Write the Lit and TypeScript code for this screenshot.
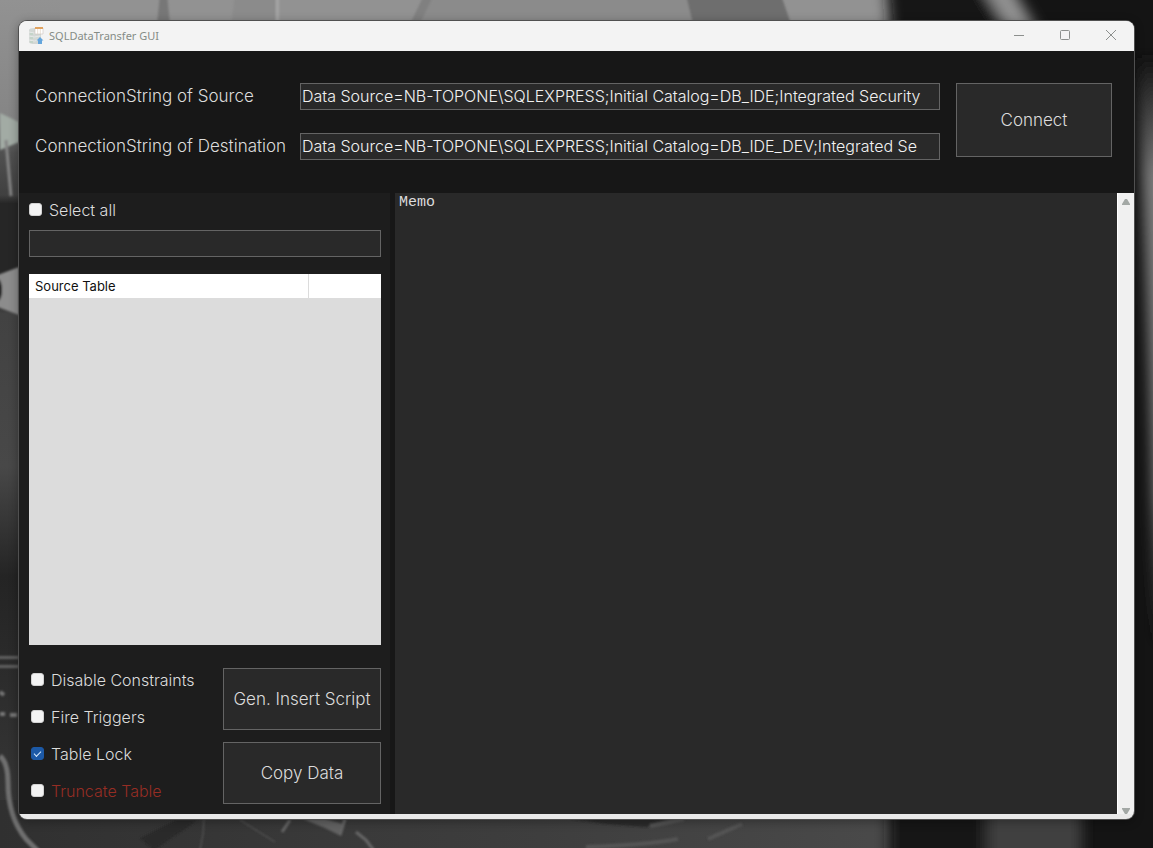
import { LitElement, html, css, svg } from "lit";
import { customElement, property, state } from "lit/decorators.js";

interface CopyOption {
  id: string;
  label: string;
  checked: boolean;
  danger?: boolean;
}

@customElement("desktop-wallpaper")
class DesktopWallpaper extends LitElement {
  static styles = css`
    :host { display: block; }
    svg { display: block; width: 100%; height: 100%; }
  `;

  render() {
    return html`
      <svg viewBox="0 0 1153 848" preserveAspectRatio="none" aria-hidden="true">
        <defs>
          <filter id="soft" filterUnits="userSpaceOnUse" x="-60" y="-60" width="1280" height="980"><feGaussianBlur stdDeviation="7" /></filter>
          <filter id="fine" filterUnits="userSpaceOnUse" x="-20" y="-20" width="1200" height="900"><feGaussianBlur stdDeviation="1" /></filter>
          <linearGradient id="floor" x1="0" x2="1" y1="0" y2="0">
            <stop offset="0" stop-color="#303030" />
            <stop offset="0.2" stop-color="#353535" />
            <stop offset="0.4" stop-color="#3a3a3a" />
            <stop offset="0.6" stop-color="#3e3e3e" />
            <stop offset="1" stop-color="#4a4a4a" />
          </linearGradient>
          <linearGradient id="left" x1="0" x2="0" y1="0" y2="1">
            <stop offset="0" stop-color="#929292" />
            <stop offset="0.14" stop-color="#858585" />
            <stop offset="0.18" stop-color="#505050" />
            <stop offset="0.23" stop-color="#404040" />
            <stop offset="0.24" stop-color="#262626" />
            <stop offset="0.35" stop-color="#262626" />
            <stop offset="0.37" stop-color="#424242" />
            <stop offset="0.55" stop-color="#484848" />
            <stop offset="0.68" stop-color="#242424" />
            <stop offset="0.8" stop-color="#2c2c2c" />
            <stop offset="1" stop-color="#3a3a3a" />
          </linearGradient>
          <linearGradient id="right" x1="0" x2="0" y1="0" y2="1">
            <stop offset="0" stop-color="#141414" />
            <stop offset="0.2" stop-color="#7c7c7c" />
            <stop offset="0.75" stop-color="#868686" />
            <stop offset="1" stop-color="#141414" />
          </linearGradient>
        </defs>
        <rect width="1153" height="848" fill="#141414" />
        <rect width="920" height="60" fill="#929292" />
        <rect width="60" height="848" fill="url(#left)" />
        <rect y="800" width="900" height="48" fill="url(#floor)" />
        <g filter="url(#fine)">
          <path d="M160 -5h7l3 29h-13z" fill="#777" />
          <path d="M235 -5h40v29h-44z" fill="#8b8b8b" />
          <path d="M276 -5h3v29h-3z" fill="#a4a4a4" />
          <path d="M424 -5h10l-14 29h-10z" fill="#808080" />
          <path d="M434 -5h252l14 29H420z" fill="#8b8b8b" />
          <path d="M686 -5h95l10 29h-98z" fill="#6e6e6e" />
          <path d="M0 113l19 9v20L0 150z" fill="#a2aba4" />
          <path d="M6 140l5 56" stroke="#858585" stroke-width="3" />
          <path d="M-5 276l24-9v48L-5 306z" fill="#8c8c8c" />
          <ellipse cx="-2" cy="290" rx="4" ry="11" fill="#191919" />
          <path d="M-5 656h24v3H-5zM-5 665h24v3H-5z" fill="#606060" />
          <path d="M0 692l4 3M0 714h5M10 715h7" stroke="#777" stroke-width="4" />
          <path d="M0 756q8 7 8 26q0 35 18 57l12 12" stroke="#707070" stroke-width="5" fill="none" />
          <path d="M140 838l36-18h22l-44 30z" fill="#292929" />
          <path d="M204 818q0 16-4 32M240 820l35 22" stroke="#5c5c5c" stroke-width="1" fill="none" />
          <path d="M303 819h22l18 5-2 12-16-8z" fill="#626262" />
          <path d="M290 820l-8 12M345 819l-5 16M356 832l10 8 9 12" stroke="#666" stroke-width="3" fill="none" />
          <path d="M570 819h100l-24 8-40-3z" fill="#2b2b2b" />
          <path d="M650 826l34-7M708 839l34-15M586 847q60-2 92-8" stroke="#545454" stroke-width="4" fill="none" />
        </g>
        <g filter="url(#soft)">
          <path d="M882-60h105l60 110H892z" fill="#161616" />
          <path d="M972-30h30l38 65h-28z" fill="#929292" />
          <path d="M889 790h93v120h-93z" fill="#121212" />
          <path d="M986 790h96v120h-96z" fill="#414141" />
          <path d="M1137 60h60v580h-40q-6-300-20-580z" fill="url(#right)" />
        </g>
      </svg>
    `;
  }
}

@customElement("title-bar")
class TitleBar extends LitElement {
  @property() caption = "";

  static styles = css`
    :host {
      display: flex;
      align-items: center;
      height: 30px;
      background: #f3f3f3;
      font: 11px/16px "Noto Sans", sans-serif;
      color: #858c86;
    }
    .logo { width: 16px; height: 18px; margin: 0 5px 0 9px; }
    .caption { flex: 1; font: inherit; margin: 0; }
    .control {
      display: flex;
      justify-content: center;
      width: 46px;
      height: 30px;
      padding: 8px 0 0;
      border: 0;
      background: none;
    }
    .control svg { width: 12px; height: 12px; fill: none; stroke: #8c8f8d; }
  `;

  render() {
    return html`
      <svg class="logo" viewBox="0 0 16 18" aria-hidden="true">
        <path d="M1 3q0-2 6-2t6 2v12q0 2-6 2t-6-2z" fill="#d3d8d5" />
        <path d="M1 5q5 2 11 0M1 9q5 2 11 0M1 13q5 2 11 0" fill="none" stroke="#e6e9e7" />
        <path d="M2 7h3M2 11h3M2 15h3" stroke="#b5d0bd" />
        <path d="M7 1h8v6H7z" fill="#fff" stroke="#ccc5bc" stroke-width=".6" />
        <path d="M7 0h8v2H7z" fill="#e0a25f" />
        <path d="M9.700 2v5M12.300 2v5" stroke="#dccbb8" stroke-width=".6" />
        <path d="M12 10l3.500 3.500H14V17h-4v-3.500H8.500z" fill="#64a5dc" />
      </svg>
      <h1 class="caption">${this.caption}</h1>
      ${[
        { name: "Minimize", shape: svg`<path d="M1 6.500h10" />` },
        { name: "Maximize", shape: svg`<rect x="1.500" y="1.500" width="9" height="9" rx="1" />` },
        { name: "Close", shape: svg`<path d="M1 1l10 10M11 1L1 11" />` },
      ].map((c) => html`<button class="control" aria-label=${c.name}><svg viewBox="0 0 12 12">${c.shape}</svg></button>`)}
    `;
  }
}

@customElement("app-root")
class AppRoot extends LitElement {
  @state() private options: CopyOption[] = [
    { id: "constraints", label: "Disable Constraints", checked: false },
    { id: "triggers", label: "Fire Triggers", checked: false },
    { id: "lock", label: "Table Lock", checked: true },
    { id: "truncate", label: "Truncate Table", checked: false, danger: true },
  ];

  static styles = css`
    :host {
      display: grid;
      box-sizing: border-box;
      min-height: 100vh;
      font: 300 16px/20px Inter, sans-serif;
      color: #dcdcdc;
    }
    * { box-sizing: border-box; }
    .wallpaper, .window { grid-area: 1 / 1; }
    .window {
      position: relative;
      display: flex;
      flex-direction: column;
      margin: 21px 19px 29px;
      padding-bottom: 5px;
      background: #e9e9e9;
      border-radius: 8px;
      overflow: hidden;
    }
    .frame {
      grid-area: 1 / 1;
      margin: 20px 18px 28px;
      border-radius: 9px;
      background: #505050;
      box-shadow: 0 2px 10px rgba(0, 0, 0, 0.3);
    }
    .connections {
      display: grid;
      grid-template-columns: 249px 1fr 156px;
      column-gap: 16px;
      padding: 32px 22px 33px 16px;
      background: #171717;
    }
    .fields {
      grid-column: 1 / 3;
      display: grid;
      grid-template-columns: subgrid;
      row-gap: 23px;
    }
    .fields label { font-size: 17px; line-height: 26px; white-space: nowrap; }
    input, button, textarea { font: inherit; color: inherit; border-radius: 0; }
    .text-box {
      width: 100%;
      min-width: 0;
      height: 27px;
      padding: 0 1px 2px;
      border: 1px solid #646464;
      background: #292929;
      color: #f2f2f2;
    }
    .button {
      border: 1px solid #646464;
      background: #292929;
      padding: 0;
      font-size: 17px;
    }
    .connect { height: 74px; }
    .workspace {
      flex: 1;
      display: grid;
      grid-template-columns: 371px 1fr;
      column-gap: 5px;
      background: #171717;
    }
    .side {
      display: flex;
      flex-direction: column;
      padding: 7px 9px 10px 10px;
      background: #1d1d1d;
    }
    .check { display: flex; align-items: center; gap: 7px; height: 20px; }
    .check input {
      appearance: none;
      display: grid;
      width: 13px;
      height: 13px;
      margin: 0 0 1px;
      border: 1px solid #d2d2d2;
      border-radius: 3px;
      background: #f3f3f3;
    }
    .check input:checked {
      border-color: #1c59a6;
      background: #1c59a6;
    }
    .check input:checked::before {
      content: "";
      width: 6px;
      height: 3px;
      border: solid #d7ebff;
      border-width: 0 0 1px 1px;
      transform: rotate(-45deg);
      place-self: center;
      margin-bottom: 2px;
    }
    .danger { color: #962d24; }
    .side .filter { flex: none; margin: 10px 0 17px; }
    .grid { flex: 1; background: #dcdcdc; }
    .grid table {
      width: 100%;
      border-collapse: collapse;
      table-layout: fixed;
      background: #fff;
      color: #101010;
      font-size: 13px;
    }
    .grid th { height: 24px; padding: 0 6px; text-align: left; font-weight: 400; }
    .grid th + th { width: 73px; border-left: 1px solid #dcdcdc; }
    .actions {
      display: grid;
      grid-template-columns: 1fr 158px;
      margin-top: 23px;
    }
    .options { display: grid; gap: 17px; padding: 2px 2px 0; align-content: start; }
    .buttons { display: grid; grid-auto-rows: 62px; gap: 12px; }
    .output { display: grid; grid-template-columns: 1fr 17px; }
    .memo {
      resize: none;
      border: 0;
      outline: 0;
      padding: 0 4px;
      background: #292929;
      color: #dcdcdc;
      font: 15px/20px "Liberation Mono", monospace;
    }
    .scrollbar {
      display: flex;
      flex-direction: column;
      justify-content: space-between;
      align-items: center;
      padding-top: 6px;
      background: #f0f0f0;
      border-left: 1px solid #fff;
    }
    .scrollbar svg { width: 8px; height: 7px; fill: #a3a8a5; }
  `;

  private toggle(id: string) {
    this.options = this.options.map((o) => (o.id === id ? { ...o, checked: !o.checked } : o));
  }

  render() {
    return html`
      <desktop-wallpaper class="wallpaper"></desktop-wallpaper>
      <div class="frame"></div>
      <main class="window">
        <title-bar caption="SQLDataTransfer GUI"></title-bar>
        <section class="connections">
          <div class="fields">
            <label for="source">ConnectionString of Source</label>
            <input id="source" class="text-box" .value=${"Data Source=NB-TOPONE\\SQLEXPRESS;Initial Catalog=DB_IDE;Integrated Security"} />
            <label for="destination">ConnectionString of Destination</label>
            <input id="destination" class="text-box" .value=${"Data Source=NB-TOPONE\\SQLEXPRESS;Initial Catalog=DB_IDE_DEV;Integrated Se"} />
          </div>
          <button class="button connect">Connect</button>
        </section>
        <div class="workspace">
          <section class="side">
            <label class="check"><input type="checkbox" />Select all</label>
            <input class="text-box filter" aria-label="Filter tables" />
            <div class="grid">
              <table>
                <thead><tr><th>Source Table</th><th></th></tr></thead>
              </table>
            </div>
            <div class="actions">
              <div class="options">
                ${this.options.map(
                  (o) => html`<label class="check ${o.danger ? "danger" : ""}">
                    <input type="checkbox" .checked=${o.checked} @change=${() => this.toggle(o.id)} />${o.label}
                  </label>`
                )}
              </div>
              <div class="buttons">
                <button class="button">Gen. Insert Script</button>
                <button class="button">Copy Data</button>
              </div>
            </div>
          </section>
          <section class="output">
            <textarea class="memo" aria-label="Memo" .value=${"Memo"}></textarea>
            <div class="scrollbar" aria-hidden="true">
              <svg viewBox="0 0 8 7"><path d="M3 0h2l3 5v1H0V5z" /></svg>
              <svg viewBox="0 0 8 7"><path d="M0 1h8v1L5 7H3L0 2z" /></svg>
            </div>
          </section>
        </div>
      </main>
    `;
  }
}
